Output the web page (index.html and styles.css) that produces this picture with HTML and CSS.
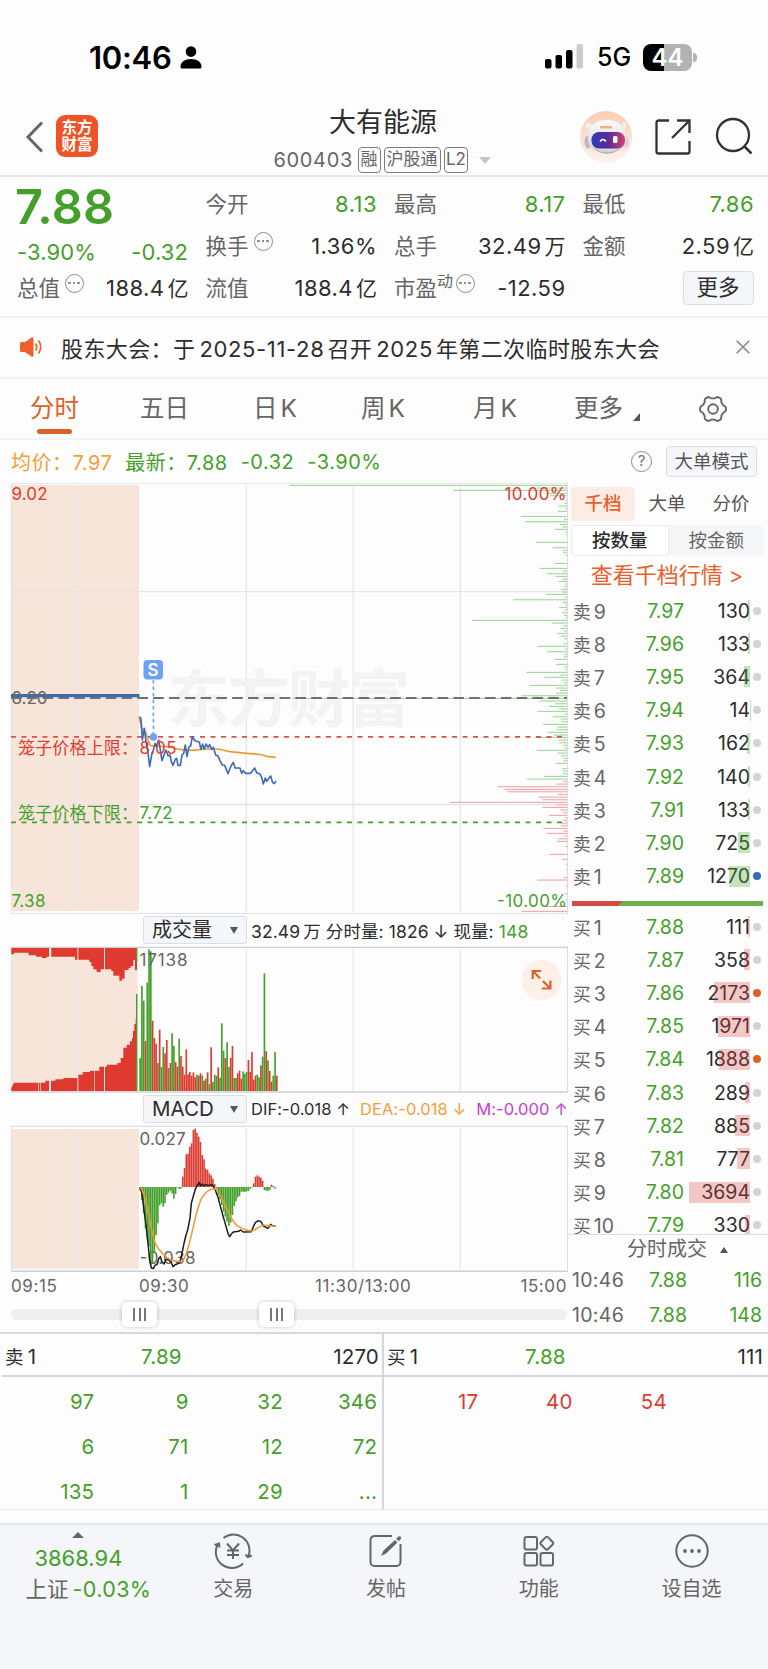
FILE: index.html
```html
<!DOCTYPE html>
<html lang="zh-CN">
<head>
<meta charset="utf-8">
<title>大有能源 600403</title>
<link rel="stylesheet" href="styles.css">
</head>
<body>
<div class="status">
  <span class="clock">10:46</span>
  <svg class="person" viewBox="0 0 22 23"><circle cx="11" cy="5.6" r="5.3"/><path d="M.5 20.500C.5 16 5 13 11 13s10.500 3 10.500 7.500c0 1.500-.6 2-1.800 2H2.300c-1.200 0-1.800-.5-1.800-2z"/></svg>
  <svg class="signal" viewBox="0 0 39 25"><rect x="0" y="15" width="6.500" height="9.500" rx="2"/><rect x="10.500" y="11" width="6.500" height="13.500" rx="2"/><rect x="21" y="6" width="6.500" height="18.500" rx="2"/><rect x="31.500" y="0" width="6.500" height="24.500" rx="2" fill="#ccc"/></svg>
  <span class="net">5G</span>
  <span class="battery">44</span><i class="nub"></i>
</div>

<header class="header">
  <svg class="back" viewBox="0 0 20 34"><path d="M17 2.500 3 17l14 14.500" fill="none" stroke="#666" stroke-width="3"/></svg>
  <div class="logo"><span>东方</span><span>财富</span></div>
  <div class="title">
    <h1>大有能源</h1>
    <div class="sub"><span class="code">600403</span><span class="tag">融</span><span class="tag">沪股通</span><span class="tag l2">L2</span><i class="drop"></i></div>
  </div>
  <svg class="robot" viewBox="0 0 52 52">
    <defs>
      <linearGradient id="rb" x1="0" y1="0" x2="0" y2="1"><stop offset="0" stop-color="#f9cdb5"/><stop offset="1" stop-color="#fdf3ee"/></linearGradient>
      <linearGradient id="shell" x1="0" y1="0" x2="0" y2="1"><stop offset="0" stop-color="#fbfafa"/><stop offset="1" stop-color="#d5d3da"/></linearGradient>
      <linearGradient id="visor" x1="0" y1="0" x2="1" y2="0"><stop offset="0" stop-color="#2d3bb8"/><stop offset=".5" stop-color="#5a2b96"/><stop offset="1" stop-color="#d8406e"/></linearGradient>
    </defs>
    <circle cx="26" cy="26" r="26" fill="url(#rb)"/>
    <path d="M11 19C4 18 5 12 8 10c0 3 3 4 6 4zM41 19c7-1 6-7 3-9 0 3-3 4-6 4z" fill="#f4efed"/>
    <ellipse cx="8" cy="31" rx="3.500" ry="6.500" fill="#bdb9c0"/><ellipse cx="46" cy="31" rx="3" ry="6" fill="#d9d4d7"/>
    <path d="M8 28C8 14 17 9 27 9s19 5 19 19c0 10-9 14-19 14S8 38 8 28z" fill="url(#shell)"/>
    <path d="M14 37c7 6 19 6 26 0-5 7-20 8-26 0z" fill="#a9a9b5"/>
    <rect x="11.500" y="21" width="33.500" height="16.500" rx="7.500" fill="url(#visor)"/>
    <rect x="20" y="15" width="12" height="2.500" rx="1" fill="#e9b27c"/>
    <path d="M20 30.500q3-4 6 0" fill="none" stroke="#fff" stroke-width="1.600"/><rect x="33" y="25" width="4.500" height="7" rx="1.500" fill="#fff"/>
  </svg>
  <svg class="share" viewBox="0 0 36 36"><path d="M14 1.500H3.500a2 2 0 0 0-2 2v29a2 2 0 0 0 2 2h29a2 2 0 0 0 2-2V22M22 1.500h12.500V14M34 2 17 19" fill="none" stroke="#333" stroke-width="2.300"/></svg>
  <svg class="search" viewBox="0 0 38 38"><circle cx="18" cy="18" r="16" fill="none" stroke="#333" stroke-width="2.300"/><path d="M29 29l7.500 7.500" stroke="#333" stroke-width="2.500"/></svg>
</header>

<section class="quote">
  <div class="big">7.88</div>
  <div class="cell"><label>今开</label><b class="g">8.13</b></div>
  <div class="cell"><label>最高</label><b class="g">8.17</b></div>
  <div class="cell"><label>最低</label><b class="g">7.86</b></div>
  <div class="cell chg"><b class="g">-3.90%</b><b class="g">-0.32</b></div>
  <div class="cell"><label>换手</label><i class="more"></i><b>1.36%</b></div>
  <div class="cell"><label>总手</label><b>32.49<u>万</u></b></div>
  <div class="cell"><label>金额</label><b>2.59<u>亿</u></b></div>
  <div class="cell"><label>总值</label><i class="more"></i><b>188.4<u>亿</u></b></div>
  <div class="cell"><label>流值</label><b>188.4<u>亿</u></b></div>
  <div class="cell"><label>市盈</label><sup>动</sup><i class="more tight"></i><b>-12.59</b></div>
  <div class="cell end"><span class="btn">更多</span></div>
</section>

<section class="notice">
  <svg class="horn" viewBox="0 0 23 20"><path d="M0 6.500Q0 5 1.500 5H5l6.500-4.500Q13.500-.5 13.500 2v16q0 2.500-2 1.500L5 15H1.500Q0 15 0 13.500z" fill="#ee5f2b"/><path d="M15.500 6.500q2.500 3.500 0 7M18.500 3.500q4.500 6.500 0 13" fill="none" stroke="#ee5f2b" stroke-width="1.700"/></svg>
  <p>股东大会：于<em>2025-11-28</em>召开<em>2025</em>年第二次临时股东大会</p>
  <svg class="close" viewBox="0 0 14 14"><path d="M.7.7l12.600 12.600M13.300.7.7 13.300" stroke="#888" stroke-width="1.600"/></svg>
</section>

<nav class="tabs">
  <span class="on">分时</span><span>五日</span><span>日<em>K</em></span><span>周<em>K</em></span><span>月<em>K</em></span><span class="moretab">更多</span>
  <svg class="gear" viewBox="-14 -14 28 28"><path id="gearPath" fill="none" stroke="#666" stroke-width="1.900" stroke-linejoin="round"/><circle r="4.800" fill="none" stroke="#666" stroke-width="1.900"/></svg>
</nav>

<div class="info">
  <span class="o">均价：7.97</span><span class="g">最新：7.88</span><span class="g">-0.32</span><span class="g">-3.90%</span>
  <i class="help">?</i><span class="btn mode">大单模式</span>
</div>

<main class="main">
  <div class="left">
    <svg class="pane" id="price" width="568" height="431" viewBox="0 483 568 431"></svg>
    <div class="bar"><span class="sel">成交量<i></i></span><span class="dat vol">32.49<u>万</u> 分时量: 1826 ↓ 现量: <em class="g">148</em></span></div>
    <svg class="pane" id="volume" width="568" height="147" viewBox="0 946 568 147"></svg>
    <div class="bar macd"><span class="sel">MACD<i></i></span><span class="dat">DIF:-0.018 ↑</span><span class="dat o">DEA:-0.018 ↓</span><span class="dat p">M:-0.000 ↑</span></div>
    <svg class="pane" id="macd" width="568" height="147" viewBox="0 1125 568 147"></svg>
    <div class="axis"><span>09:15</span><span>09:30</span><span>11:30/13:00</span><span>15:00</span></div>
    <div class="slider"><i class="h1"></i><i class="h2"></i></div>
  </div>
  <aside class="right">
    <div class="rtabs"><span class="on">千档</span><span>大单</span><span>分价</span></div>
    <div class="seg"><span class="on">按数量</span><span>按金额</span></div>
    <div class="link">查看千档行情 &gt;</div>
    <div class="book" id="sell"></div>
    <div class="ratio"></div>
    <div class="book buy" id="buy"></div>
    <div class="ticks">
      <div class="thead">分时成交<i></i></div>
      <div class="tick"><span>10:46</span><b>7.88</b><b>116</b></div>
      <div class="tick"><span>10:46</span><b>7.88</b><b>148</b></div>
    </div>
  </aside>
</main>

<section class="queue">
  <div class="qcol">
    <div class="qhead"><span>卖<em>1</em></span><b class="g">7.89</b><span>1270</span></div>
    <div class="qgrid g"><span>97</span><span>9</span><span>32</span><span>346</span><span>6</span><span>71</span><span>12</span><span>72</span><span>135</span><span>1</span><span>29</span><span>...</span></div>
  </div>
  <div class="qcol">
    <div class="qhead"><span>买<em>1</em></span><b class="g">7.88</b><span>111</span></div>
    <div class="qgrid r"><span>17</span><span>40</span><span>54</span></div>
  </div>
</section>

<footer class="foot">
  <div class="index"><i></i><b>3868.94</b><span>上证 <em>-0.03%</em></span></div>
  <div class="item"><svg viewBox="0 0 40 36"><g fill="none" stroke="#666" stroke-width="2"><path d="M10.500 5A16 16 0 0 1 35.500 23M30 30.500A16 16 0 0 1 5 11M1.500 12l4.500-1.500.5 4M32.500 21.500l2.300 2.500 4-1.500"/><path d="M14 10.500l6 7 6-7M20 17.500V26M14 17.500h12M14 22h12"/></g></svg><span>交易</span></div>
  <div class="item"><svg viewBox="0 0 40 36"><g fill="none" stroke="#666" stroke-width="2"><path d="M26 3H8.500a4 4 0 0 0-4 4v22a4 4 0 0 0 4 4h22a4 4 0 0 0 4-4V11"/></g><path d="M15 23l2.500-5.500L29 7l2.500 2.500L20 20.500zM30.200 5.800l2.300-2.300q1.500-.8 2.300.3.800 1.200 0 2.200L32.700 8.300z" fill="#666"/></svg><span>发帖</span></div>
  <div class="item"><svg viewBox="0 0 40 36"><g fill="none" stroke="#666" stroke-width="2"><rect x="5.500" y="4" width="12.500" height="12.500" rx="2"/><rect x="5.500" y="20" width="12.500" height="12.500" rx="2"/><rect x="21.500" y="20" width="12.500" height="12.500" rx="2"/><rect x="22.800" y="5.200" width="10" height="10" rx="1.800" transform="rotate(45 27.800 10.200)"/></g></svg><span>功能</span></div>
  <div class="item"><svg viewBox="0 0 40 36"><circle cx="20" cy="18" r="15.700" fill="none" stroke="#666" stroke-width="2"/><g fill="#666"><circle cx="13" cy="18" r="1.900"/><circle cx="20" cy="18" r="1.900"/><circle cx="27" cy="18" r="1.900"/></g></svg><span>设自选</span></div>
</footer>
<script src="charts.js"></script>
</body>
</html>
```

FILE: styles.css
```css
* { box-sizing: border-box; }
body, h1, p { margin: 0; }
body { width: 768px; height: 1669px; overflow: hidden; background: #fdfdfd; color: #2d2d2d; font-family: Inter, "Noto Sans CJK SC", sans-serif; font-size: 20px; font-weight: 400; }
i, em { font-style: normal; }
u { text-decoration: none; margin-left: 3px; }
b { font-weight: 400; }
svg { display: block; flex: none; }
.g { color: #45a02b; } .r { color: #dd3c30; } .o { color: #f0a03c; } .p { color: #c341d6; }

.status { height: 95px; display: flex; align-items: center; padding: 19px 71px 0 89px; }
.clock { font-size: 31px; font-weight: 600; letter-spacing: -.3px; width: 91px; color: #000; }
.person { width: 22px; height: 23px; }
.signal { width: 39px; height: 25px; margin-left: 343px; margin-top: -2px; }
.net { font-size: 25px; font-weight: 500; margin-left: 13px; width: 46px; color: #000; }
.battery { width: 49px; height: 27px; border-radius: 8px; background: linear-gradient(90deg, #000 0 21px, #b2b2b2 21px); color: #fff; font-size: 24px; font-weight: 600; line-height: 27px; text-align: center; }
.nub { width: 4px; height: 9px; border-radius: 0 4px 4px 0; background: #b2b2b2; margin-left: 1px; }

.header { height: 82px; border-bottom: 2px solid #e9e9e9; display: flex; padding-left: 25px; position: relative; }
.back { width: 20px; height: 34px; margin-top: 25px; }
.logo { width: 42px; height: 42px; margin: 20px 0 0 11px; border-radius: 9px; background: #ee5426; color: #fff; font-weight: 700; font-size: 15.500px; line-height: 17px; display: flex; flex-direction: column; align-items: center; padding-top: 4px; }
.title { width: 250px; margin-left: 165px; display: flex; flex-direction: column; align-items: center; }
.title h1 { font-size: 27px; font-weight: 400; line-height: 36px; margin: 10px 0 0 -10px; }
.sub { display: flex; align-items: center; margin: 6px 0 0 -11px; color: #666; height: 26px; }
.code { font-size: 20px; letter-spacing: .65px; width: 84px; }
.tag { border: 1.500px solid #7d7d7d; border-radius: 4px; height: 26px; line-height: 23px; font-size: 17px; padding: 0 2px; margin-right: 3px; }
.l2 { padding: 0 1.500px; }
.drop { border: 6px solid transparent; border-top: 7px solid #c6c6c6; border-bottom: 0; margin-left: 8px; }
.robot { width: 52px; height: 52px; margin: 16px 0 0 66.500px; }
.share { width: 36px; height: 36px; margin: 24px 0 0 23px; }
.search { width: 38px; height: 38px; margin: 22px 0 0 24px; }

.quote { height: 141px; border-bottom: 2px solid #f2f2f2; padding: 6px 14px 0 17px; display: grid; grid-template-columns: repeat(4, 171px); column-gap: 17.500px; grid-template-rows: 42px 42px 42px; font-size: 22px; }
.big { font-size: 48.500px; font-weight: 600; color: #45a02b; line-height: 48px; letter-spacing: .3px; margin-left: -2px; }
.cell { display: flex; align-items: center; line-height: 42px; }
.cell b { margin-left: auto; letter-spacing: .45px; margin-right: -.5px; }
.cell label { font-size: 21.500px; color: #666; }
.chg { justify-content: space-between; padding-top: 12px; }
.chg b { margin: 0; letter-spacing: .1px; }
.cell b u { font-size: 21px; letter-spacing: 0; }
.cell sup { font-size: 16px; line-height: 16px; color: #666; align-self: flex-start; margin-top: 6px; }
.more { width: 19px; height: 19px; border: 1.600px solid #8e8e8e; border-radius: 50%; margin: -10px 0 0 5px; background: radial-gradient(circle at 3.500px 8px, #8e8e8e 1.100px, transparent 1.500px), radial-gradient(circle at 8px 8px, #8e8e8e 1.100px, transparent 1.500px), radial-gradient(circle at 12.500px 8px, #8e8e8e 1.100px, transparent 1.500px); }
.more.tight { margin-left: 3px; }
.end { justify-content: flex-end; }
.btn { background: #f5f6f9; border: 1px solid #dadde5; border-radius: 4px; text-align: center; }
.end .btn { width: 71px; height: 34px; line-height: 30px; font-size: 21.500px; }

.notice { height: 61px; border-bottom: 2px solid #f2f2f2; display: flex; align-items: center; padding: 0 18px 1px 20px; }
.horn { width: 23px; height: 20px; }
.notice p { margin-left: 18px; font-size: 22px; letter-spacing: .4px; white-space: nowrap; flex: 1; }
.notice em { margin: 0 3px 0 4px; letter-spacing: .65px; }
.close { width: 14px; height: 14px; }

.tabs { height: 61px; border-bottom: 2px solid #f2f2f2; display: flex; align-items: center; color: #666; font-size: 24.500px; padding-left: 30px; }
.tabs span { width: 110px; line-height: 57px; position: relative; white-space: nowrap; }
.tabs span:nth-child(3) { margin-left: 3px; width: 108px; }
.tabs span:nth-child(4) { width: 112px; }
.tabs span:nth-child(5) { width: 101px; }
.tabs em { margin-left: 3px; }
.tabs .on { color: #dd6127; }
.tabs .on::after { content: ""; position: absolute; left: 7px; top: 49px; width: 35px; height: 5px; border-radius: 3px; background: #dd6127; }
.moretab::after { content: ""; position: absolute; left: 59px; top: 33px; border-left: 7px solid transparent; border-bottom: 8px solid #555; }
.gear { width: 28px; height: 28px; margin-left: 15px; }

.info { height: 43px; padding: 0 11px 0 11px; display: flex; align-items: center; font-size: 20px; letter-spacing: .5px; white-space: nowrap; }
.info > span { margin-right: 13px; }
.help { margin-left: auto; width: 21px; height: 21px; border: 1.500px solid #8a8a8a; border-radius: 50%; color: #777; font-size: 15px; line-height: 18px; text-align: center; letter-spacing: 0; margin-right: 14px; }
.info .mode { width: 91px; height: 31px; margin: 0; line-height: 28px; font-size: 18.500px; letter-spacing: 0; color: #555; }

.main { height: 851px; display: flex; border-bottom: 2px solid #d5d6de; }
.left { width: 568px; }
.pane { overflow: hidden; }
.bar { height: 32px; display: flex; align-items: center; padding-left: 143px; font-size: 17.500px; white-space: nowrap; }
.sel { width: 104px; height: 28px; flex: none; border: 1px solid #dadde5; border-radius: 3px; background: #f5f6f9; font-size: 20px; line-height: 26px; padding: 0 8px; display: flex; justify-content: space-between; align-items: center; }
.sel i { border: 4px solid transparent; border-top: 7px solid #555; border-bottom: 0; }
.dat { margin-left: 4px; }
.vol { letter-spacing: .1px; }
.macd .dat { font-size: 16.500px; margin-right: 6px; letter-spacing: .05px; }
.macd .sel { font-size: 20.500px; }
.axis { height: 31px; display: flex; font-size: 17px; letter-spacing: .6px; line-height: 28px; padding-left: 11px; color: #666; }
.axis span:nth-child(1) { width: 128px; }
.axis span:nth-child(2) { width: 176px; }
.axis span:nth-child(4) { margin-left: auto; margin-right: 1px; }
.slider { height: 11px; margin: 6px 1px 0 11px; border-radius: 6px; background: #efeff2; position: relative; }
.slider i { position: absolute; top: -7px; width: 35px; height: 25px; border-radius: 5px; background: linear-gradient(#777, #777) 11px 6px/2px 13px no-repeat, linear-gradient(#777, #777) 16.500px 6px/2px 13px no-repeat, linear-gradient(#777, #777) 22px 6px/2px 13px no-repeat, #fff; box-shadow: 0 0 4px rgba(0, 0, 0, .22); }
.h1 { left: 111px; } .h2 { left: 248px; }

.right { width: 200px; padding-left: 3px; }
.rtabs { display: flex; padding-top: 4px; height: 42px; font-size: 18.500px; color: #555; }
.rtabs span { width: 64px; height: 34px; line-height: 33px; text-align: center; border-radius: 4px; }
.rtabs .on { background: #fcece3; color: #e8602c; font-weight: 500; }
.seg { width: 193px; height: 31px; display: flex; background: #f5f6f8; border-radius: 5px; font-size: 18.500px; line-height: 30px; color: #666; text-align: center; }
.seg span { flex: 1; }
.seg .on { background: #fff; border: 1px solid #e8e9ee; border-radius: 5px; line-height: 28px; color: #2d2d2d; font-weight: 500; }
.link { height: 38px; line-height: 39px; text-align: center; font-size: 22px; color: #e8602c; white-space: nowrap; margin-right: 5px; }
.book { padding-left: 2px; }
.lv { height: 33.200px; display: flex; align-items: center; position: relative; font-size: 19.500px; color: #666; }
.lv span { width: 41px; white-space: nowrap; }
.lv span em { margin-left: 3px; }
.lv span u { margin: 0; font-size: 17.800px; }
.lv b { color: #45a02b; width: 70px; text-align: right; }
.lv s { text-decoration: none; color: #2d2d2d; width: 66px; text-align: right; }
.lv::after { content: ""; width: 8px; height: 8px; border-radius: 50%; background: #d2d3da; margin-left: 3px; }
.lv.blue::after { background: #3c6ab5; } .lv.org::after { background: #dd6127; }
.lv i { position: absolute; right: 18px; top: 6px; height: 21px; background: rgba(80, 180, 60, .33); }
.buy .lv i { background: rgba(221, 60, 60, .28); }
.ratio { width: 191px; height: 5px; margin: 7px 0 4px 1px; background: linear-gradient(135deg, #d34b45 0 36px, #6bb04b 36px); }
.book.buy { height: 324px; overflow: hidden; }
#sell { height: 300px; }
.ticks { border-top: 1.500px solid #dddee4; margin-left: -3px; padding-left: 4px; }
.thead { height: 29px; line-height: 27px; font-size: 20px; color: #666; padding-left: 55px; display: flex; align-items: center; }
.thead i { border: 4.500px solid transparent; border-bottom: 6px solid #555; border-top: 0; margin-left: 13px; }
.tick { display: flex; height: 34.500px; align-items: center; font-size: 19.500px; color: #666; padding-bottom: 2px; }
.tick b { color: #45a02b; text-align: right; width: 62px; }
.tick span { width: 53px; letter-spacing: .3px; }
.tick b:last-child { width: 75px; }

.queue { height: 176px; display: flex; border-bottom: 1px solid #e8e9ee; font-size: 20.500px; letter-spacing: .2px; }
.qcol { width: 384px; border-left: 2px solid transparent; }
.qcol:last-child { border-left-color: #d5d6de; width: 386px; margin-left: -2px; }
.qhead { height: 43px; border-bottom: 2px solid #d5d6de; display: grid; grid-template-columns: 136px 1fr auto; align-items: center; padding: 3px 5px 0 3px; }
.qhead span:first-child { font-size: 18.500px; } .qhead em { font-size: 20.500px; margin-left: 4px; }
.qcol:last-child .qhead { grid-template-columns: 138px 1fr auto; }
.qgrid { display: grid; grid-template-columns: repeat(4, 94.300px); grid-auto-rows: 44.800px; text-align: right; line-height: 50px; margin-left: -2px; }
.qcol:last-child .qgrid { margin-left: 0; }

.foot { margin-top: 13px; height: 146px; background: #f4f6f9; border-top: 2px solid #e3e5e9; display: flex; color: #666; }
.index { width: 157px; display: flex; flex-direction: column; align-items: center; padding: 7px 0 0; font-size: 22px; white-space: nowrap; }
.index i { border: 6px solid transparent; border-bottom: 6px solid #666; border-top: 0; }
.index b, .index em { color: #45a02b; }
.index b { line-height: 40px; } .index span { line-height: 22px; font-size: 21.500px; padding-left: 20px; }
.index em { margin-left: -2px; letter-spacing: .35px; }
.item { width: 153px; display: flex; flex-direction: column; align-items: center; padding-top: 8px; }
.item svg { width: 40px; height: 36px; } .item span { margin-top: 6px; line-height: 28px; }
```

FILE: charts.js
```javascript
const GREEN = '#45a02b', RED = '#dd3c30', ORANGE = '#ee9a32', GRID = '#e4e6ec';
const FONT = 'font-family="Inter, Noto Sans CJK SC, sans-serif"';
const line = (x1, y1, x2, y2, c, w = 1, extra = '') => `<line x1="${x1}" y1="${y1}" x2="${x2}" y2="${y2}" stroke="${c}" stroke-width="${w}" ${extra}/>`;
const rect = (x, y, w, h, c) => `<rect x="${x}" y="${y}" width="${w}" height="${h}" fill="${c}"/>`;
const text = (x, y, s, c, len, extra = '') => `<text x="${x}" y="${y}" fill="${c}" font-size="17" ${FONT} ${len ? `textLength="${len}"` : ''} ${extra}>${s}</text>`;
const grid = (t, b) => [75, 246.3, 353.3, 460.3].map(x => line(x, t, x, b, GRID, 1.3)).join('');
const pairs = s => s.trim().split(/\s+/).map(t => t.split(':'));

/* price pane */
const depthGreen = '46:27 54:770 61:519 70:800 77:810 92:856 100:853 108:837 116:855 124:834 139:723 148:852 155:735 163:839 171:848 178:825 186:855 194:858 217:769 233:818 241:848 248:849 256:856 280:823 295:778 303:848 311:802 319:826 327:848 334:835 342:855 350:853 358:843 366:846 373:797 381:855 389:700 397:847 404:855 412:837 420:853 428:847 436:852 443:856 451:576 459:815 467:850 475:842 483:852 490:832 498:843 506:852 521:850 529:772 537:855 545:801 553:852 560:852 568:824 583:828 591:851 599:856 607:738 615:839 622:793 630:845 638:852 646:748 654:827 661:840 669:828 677:725 685:37 693:778 701:825 709:807 716:836 724:772 732:852 740:818 747:842 755:843 763:789 771:833 779:829 787:803 795:822 802:765 810:835 818:838 826:850 834:853 841:770 849:832 857:843 865:850 872:850 880:827 896:846 903:848 911:849 919:792 927:740';
const depthRed = '934:850 942:828 950:654 958:673 965:681 973:834 981:776 989:787 997:509 1004:830 1012:787 1020:841 1028:849 1036:808 1043:856 1051:850 1059:843 1067:843 1075:790 1083:850 1090:801 1098:852 1106:834 1114:831 1129:855 1153:810 1168:847 1184:858 1200:858 1223:851 1230:771 1247:857 1270:855 1290:857 1309:800 1324:725';
const depth = (d, c) => pairs(d).map(([y, x]) => rect(280 + x / 3, 469.500 + y / 3, (861 - x) / 3, 1.15, c)).join('');
document.getElementById('price').innerHTML =
  rect(11, 485, 128, 426, '#f8e5da') + grid(485, 911) +
  line(11, 591.6, 567, 591.6, GRID, 1.3) + line(11, 804.5, 567, 804.5, GRID, 1.3) +
  line(11, 483, 757, 483, '#dfe0e5', 1.6) + line(11.3, 483, 11.3, 914, '#e3e4e8') + line(11, 913.4, 568, 913.4, '#dfe0e5') + line(567.5, 483, 567.5, 914, '#dcdde3') +
  text(168, 722, '东方财富', '#f3f3f3', 242, 'font-weight="700" style="font-size:62px"') +
  depth(depthGreen, '#a4d99e') + depth(depthRed, '#f2aaaa') +
  line(11, 695.7, 139.500, 695.7, '#3c6ab5', 3.2) +
  text(11.500, 703.500, '8.20', '#666', 36) +
  line(11, 698, 567, 698, '#707070', 1.8, 'stroke-dasharray="10.600 5.200"') +
  line(11, 736.8, 567, 736.8, '#d9534b', 1.8, 'stroke-dasharray="5 5.500"') +
  line(11, 822.3, 567, 822.3, GREEN, 1.8, 'stroke-dasharray="5 5.500"') +
  `<g transform="translate(0 640) scale(.33333)" fill="none" stroke-width="4.800" stroke-linejoin="round">
   <path stroke="${ORANGE}" d="M417 230 424 262 431 270 438 278 444 300 452 317 470 318 500 320 522 325 545 329 575 331 620 327 655 327 690 335 740 340 785 344 800 349 827 352"/>
   <path stroke="#3c6ab5" d="M419 230 423 236 427 300 433 265 438 305 443 330 449 380 455 345 460 330 465 310 470 320 476 300 481 330 486 362 492 345 498 330 504 347 510 345 514 365 519 376 526 358 530 355 534 376 541 376 546 345 551 340 556 315 561 350 567 320 572 318 577 290 583 300 588 304 598 306 603 328 608 312 613 328 618 312 624 322 629 314 635 328 640 322 647 345 654 348 660 362 667 375 674 376 684 401 692 380 700 367 705 384 720 384 725 400 730 392 736 400 752 400 764 384 770 398 780 402 785 412 790 432 796 414 800 424 812 408 818 428 823 431 828 423"/></g>` +
  line(153.4, 680, 153.4, 736, '#6ea2f5', 1.6, 'stroke-dasharray="3.5 3"') + '<circle cx="153.4" cy="737" r="3.8" fill="#6ea2f5"/><rect x="143.500" y="660" width="19.500" height="19.500" rx="4" fill="#6ea2f5"/>' +
  text(147.6, 676, 'S', '#fff', 0, 'font-weight="600"') +
  text(11.500, 500.3, '9.02', RED, 36) + text(504.500, 500.3, '10.00%', RED, 62) + text(11.500, 906.500, '7.38', GREEN, 34) + text(497, 906.500, '-10.00%', GREEN, 70) +
  text(18, 754.3, '笼子价格上限：', RED, 120) + text(139.500, 754.3, '8.05', RED, 37) +
  text(18, 818.8, '笼子价格下限：', GREEN, 120) + text(139.500, 818.8, '7.72', GREEN, 33);

/* volume pane: colour + top edge, three units per pixel */
const vol = 'g444 g228 g272 r393 g218 g118 g124 r332 r384 r401 g459 r359 g471 g411 r430 r390 g474 r459 g370 g408 r456 r470 g386 r438 r470 r494 r418 r493 r486 r497 r487 r502 g494 r497 r490 g496 r512 g506 r487 g522 r412 g516 g494 g497 r472 g503 g340 g422 r444 g397 g471 r443 r408 g504 g504 r490 r482 r506 g484 g491 g486 r450 r486 r426 r509 r497 g494 g502 r466 g440 g190 r424 g451 r483 r515 g497 g426 r497'.split(' ');
document.getElementById('volume').innerHTML =
  rect(11, 948, 128, 143, '#f8e5da') + grid(949, 1091) +
  line(11, 947.3, 567, 947.3, '#cdced8', 1.3) + line(11, 1092, 567, 1092, '#cdced8', 1.3) + line(11.3, 946, 11.3, 1093, '#e3e4e8') + line(567.5, 946, 567.5, 1093, '#dcdde3') +
  `<g transform="translate(0 910) scale(.33333)">
   <path fill="#df3a2f" d="M34 114V133H42V128H86V136H108V140H126V144H140V140H225V149H268V156H274V168H280V178H290V186H302V178H334V183H340V197H358V212H366V206H374V180H386V174H392V168H400V150H405V180H411V114z"/>
   <path fill="#df3a2f" d="M34 543V534L42 518H136V512H166V508H190V504H234V494H248V486H270V482H298V470H320V464H352V459H362V444H370V413H380V404H390V394H396V384H399V362H403V342H407V326H411V543z"/>
   <path fill="#fbe4dc" d="M147 114h7v32h-7zM232 114h3v36h-3zM312 114h3v66h-3zM147 508h6v35h-6zM232 494h3v50h-3zM312 466h3v77h-3zM282 472h2v71h-2zM114 518h2v25h-2zM121 518h2v25h-2z"/>
   <path fill="${GREEN}" d="M408 114h5v40h-5zM408 252h5v291h-5z"/><path fill="#fff" d="M413 114h4v430h-4z"/>` +
  vol.map((v, i) => rect(418 + i * 5.325, v.slice(1), 5, 543 - v.slice(1), v[0] === 'g' ? GREEN : RED)).join('') + '</g>' +
  text(139.500, 966, '17138', '#666', 48) +
  '<circle cx="541.500" cy="980" r="20" fill="#fcf0e9"/><path d="M540.200 978.500l-7.500-7.500M532.700 979v-8h8.500M542.800 981l7.500 7.500M550.400 980.500v8h-8.500" fill="none" stroke="#dd6127" stroke-width="2.200"/>';

/* MACD pane */
const hist = [842,870,910,955,985,1010,1065,1060,1030,975,940,886,880,890,880,854,848,842,850,866,852,833,836,836,800,774,733,731,710,700,660,656,668,680,696,735,748,776,780,790,796,806,822,836,855,868,885,905,920,935,948,938,915,888,874,862,858,845,845,846,844,843,836,833,820,800,796,800,803,812,840,842,843,840,824,828,836];
document.getElementById('macd').innerHTML =
  rect(11, 1129, 128, 140, '#f8e5da') + grid(1129, 1269) +
  line(11, 1126.4, 567, 1126.4, '#dfe0e5', 1.3) + line(11, 1271.3, 567, 1271.3, '#cdced8', 1.4) + line(11.3, 1126, 11.3, 1272, '#e3e4e8') + line(567.5, 1125, 567.5, 1272, '#dcdde3') +
  text(139.500, 1145, '0.027', '#666', 46) + text(139.500, 1263.500, '-0.038', '#666', 56) +
  '<g transform="translate(0 910) scale(.33333)">' +
  hist.map((y, i) => rect(418 + i * 5.325, Math.min(y, 831), 4.8, Math.abs(831 - y), y > 831 ? GREEN : RED)).join('') +
  `<path fill="none" stroke="#1d1d1d" stroke-width="4.500" stroke-linejoin="round" d="M420 832 426 850 432 900 438 945 444 1000 449 1050 454 1074 460 1076 465 1066 472 1062 476 1046 481 1040 486 1056 492 1062 498 1048 506 1050 513 1056 519 1070 525 1064 532 1062 540 1056 546 1030 552 1000 558 975 563 960 570 925 574 880 580 858 586 838 593 824 598 817 601 828 607 822 612 828 618 824 625 827 632 824 638 826 646 840 655 865 664 900 674 935 684 970 689 980 696 970 700 966 716 964 722 960 730 966 754 965 760 950 766 938 775 932 784 936 790 948 804 955 812 943 818 948 827 948"/>
   <path fill="none" stroke="${ORANGE}" stroke-width="4.500" d="M420 832C440 845 450 960 466 1000C475 1022 490 1032 500 1042C518 1054 535 1056 548 1054C572 1020 580 920 604 866C620 840 635 834 648 838C670 855 685 925 710 946C730 958 745 964 758 962C775 956 780 944 795 946L827 949"/></g>`;

/* settings gear: rounded six-tooth outline */
let d = '';
for (let i = 0; i < 72; i++) {
  const a = i / 72 * 2 * Math.PI, r = 11.8 + 1.2 * Math.tanh(2 * Math.cos(6 * a));
  d += (i ? 'L' : 'M') + (r * Math.cos(a)).toFixed(2) + ' ' + (r * Math.sin(a)).toFixed(2);
}
document.getElementById('gearPath').setAttribute('d', d + 'z');

/* order book */
const row = (side, n, price, qty, mark) => `<div class="lv ${mark || ''}"><span><u>${side}</u><em>${n}</em></span><b>${price}</b><s>${qty}</s><i style="width:${(qty / 60.8).toFixed(1)}px"></i></div>`;
document.getElementById('sell').innerHTML = [130, 133, 364, 14, 162, 140, 133, 725, 1270].map((q, i) => row('卖', 9 - i, (7.97 - i / 100).toFixed(2), q, i === 8 && 'blue')).join('');
document.getElementById('buy').innerHTML = [111, 358, 2173, 1971, 1888, 289, 885, 777, 3694, 330].map((q, i) => row('买', i + 1, (7.88 - i / 100).toFixed(2), q, (i === 2 || i === 4) && 'org')).join('');
```
